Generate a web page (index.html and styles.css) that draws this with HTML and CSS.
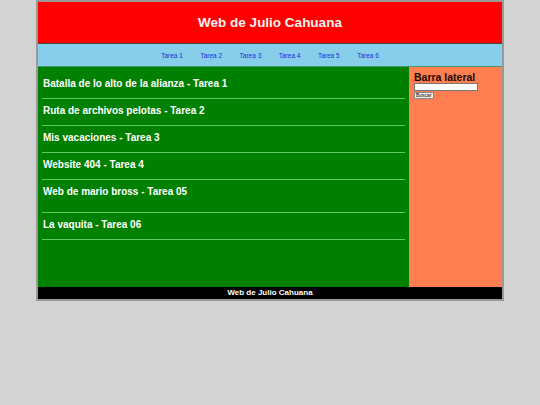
FILE: index.html
```html
<!DOCTYPE html>
<html lang="es">
<head>
  <meta charset="UTF-8">
  <meta name="viewport" content="width=device-width, initial-scale=1.0">
  <title>Web de Julio Cahuana</title>
  <link rel="stylesheet" href="styles.css">
</head>
<body>
  <div class="page">
    <header class="header">
      <h1>Web de Julio Cahuana</h1>
    </header>
    <nav class="menu">
      <a href="#">Tarea 1</a>
      <a href="#">Tarea 2</a>
      <a href="#">Tarea 3</a>
      <a href="#">Tarea 4</a>
      <a href="#">Tarea 5</a>
      <a href="#">Tarea 6</a>
    </nav>
    <div class="content">
      <main class="main">
        <div class="entry"><h3>Batalla de lo alto de la alianza - Tarea 1</h3></div>
        <div class="entry"><h3>Ruta de archivos pelotas - Tarea 2</h3></div>
        <div class="entry"><h3>Mis vacaciones - Tarea 3</h3></div>
        <div class="entry"><h3>Website 404 - Tarea 4</h3></div>
        <div class="entry entry-tall"><h3>Web de mario bross - Tarea 05</h3></div>
        <div class="entry"><h3>La vaquita - Tarea 06</h3></div>
      </main>
      <aside class="sidebar">
        <h3>Barra lateral</h3>
        <form class="search">
          <input type="text">
          <button type="submit">Buscar</button>
        </form>
      </aside>
    </div>
    <footer class="footer">Web de Julio Cahuana</footer>
  </div>
</body>
</html>
```

FILE: styles.css
```css
body {
  margin: 0;
  padding: 0;
  background-color: #d3d3d3;
  font-family: "Liberation Sans", Arial, sans-serif;
}
.page {
  width: 464px;
  margin: 0 auto;
  border: 2px solid #999;
}
.header {
  height: 41px;
  background-color: red;
  border-bottom: 1px solid #444;
  display: flex;
  justify-content: center;
  align-items: center;
}
.header h1 {
  margin: 0;
  font-size: 13.5px;
  color: #f2f2f2;
}
.menu {
  height: 22px;
  background-color: skyblue;
  border-bottom: 1px solid #3f9c6a;
  display: flex;
  justify-content: center;
  align-items: center;
  gap: 17.5px;
}
.menu a {
  font-size: 6.5px;
  color: #1530e0;
  text-decoration: none;
}
.content {
  display: flex;
  height: 220px;
}
.main {
  flex: 1;
  background-color: green;
  padding: 5px 4px 0;
}
.entry {
  padding: 5px 1px 8px;
  border-bottom: 1px solid #5fc95f;
}
.entry-tall {
  padding-bottom: 14px;
}
.entry h3 {
  margin: 0;
  font-size: 10px;
  line-height: 13px;
  color: white;
}
.sidebar {
  width: 83px;
  background-color: coral;
  padding: 4px 5px;
}
.sidebar h3 {
  margin: 0;
  font-size: 10.5px;
  line-height: 12px;
  color: #1a0800;
}
.search input {
  display: block;
  width: 64px;
  height: 8px;
  padding: 0;
  border: 1px solid #777;
  box-sizing: border-box;
}
.search button {
  display: block;
  margin-top: 1px;
  height: 7px;
  padding: 0 1px;
  font-size: 5px;
  line-height: 5px;
  border: 1px solid #888;
  background-color: #efefef;
  font-family: "Liberation Sans", Arial, sans-serif;
}
.footer {
  height: 12px;
  background-color: black;
  color: white;
  font-size: 8px;
  font-weight: bold;
  text-align: center;
  line-height: 12px;
}
```
